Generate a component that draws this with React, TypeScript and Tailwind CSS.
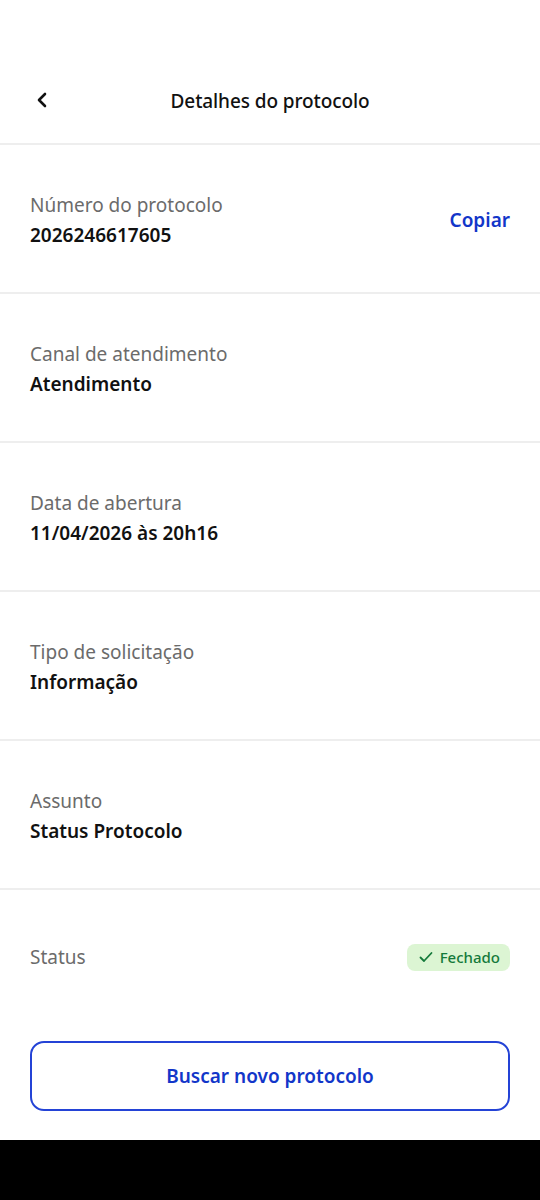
import React from "react";

type Item = { label: string; value: string; copy?: boolean };

const items: Item[] = [
  { label: "Número do protocolo", value: "2026246617605", copy: true },
  { label: "Canal de atendimento", value: "Atendimento" },
  { label: "Data de abertura", value: "11/04/2026 às 20h16" },
  { label: "Tipo de solicitação", value: "Informação" },
  { label: "Assunto", value: "Status Protocolo" },
];

export default function App() {
  return (
    <div
      className="w-[540px] h-[1200px] bg-white flex flex-col text-[#111]"
      style={{ fontFamily: '"Noto Sans", "Open Sans", sans-serif' }}
    >
      {/* header */}
      <div className="h-[145px] pt-[60px] border-b-2 border-[#eeeeee]">
        <div className="relative h-[82px] flex items-center justify-center">
          <button className="absolute left-[30px] top-[28px] w-6 h-6 flex items-center justify-center">
            <svg width="14" height="16" viewBox="0 0 14 16" fill="none">
              <path
                d="M10 2 L4 8 L10 14"
                stroke="#111"
                strokeWidth="2.6"
                strokeLinecap="round"
                strokeLinejoin="round"
              />
            </svg>
          </button>
          <h1 className="text-[19px] font-medium tracking-[-0.1px]">Detalhes do protocolo</h1>
        </div>
      </div>

      {items.map((it) => (
        <div
          key={it.label}
          className="h-[149px] px-[30px] flex items-center justify-between border-b-2 border-[#eeeeee]"
        >
          <div className="flex flex-col gap-[4px] mt-[2px]">
            <span className="text-[19px] text-[#6b6b6b] leading-[26px]">{it.label}</span>
            <span className="text-[19px] font-semibold leading-[26px]">{it.value}</span>
          </div>
          {it.copy && (
            <span className="mt-[4px] text-[19px] font-semibold text-[#1236c9]">Copiar</span>
          )}
        </div>
      ))}

      {/* status */}
      <div className="h-[130px] px-[30px] pt-[4px] flex items-center justify-between">
        <span className="text-[19px] text-[#6b6b6b]">Status</span>
        <span className="h-[27px] pl-[12px] pr-[10px] rounded-[8px] bg-[#dcf5d3] flex items-center gap-[7px] text-[#157a3b] text-[15px] font-medium">
          <svg width="14" height="12" viewBox="0 0 14 12" fill="none">
            <path
              d="M1.5 6.5 L5 10 L12.5 2"
              stroke="#157a3b"
              strokeWidth="1.8"
              strokeLinecap="round"
              strokeLinejoin="round"
            />
          </svg>
          Fechado
        </span>
      </div>

      <div className="px-[30px] pt-[21px]">
        <button className="w-full h-[70px] rounded-[14px] border-2 border-[#2443d6] text-[#1236c9] text-[19px] font-semibold flex items-center justify-center">
          Buscar novo protocolo
        </button>
      </div>

      <div className="mt-auto h-[60px] bg-black" />
    </div>
  );
}
